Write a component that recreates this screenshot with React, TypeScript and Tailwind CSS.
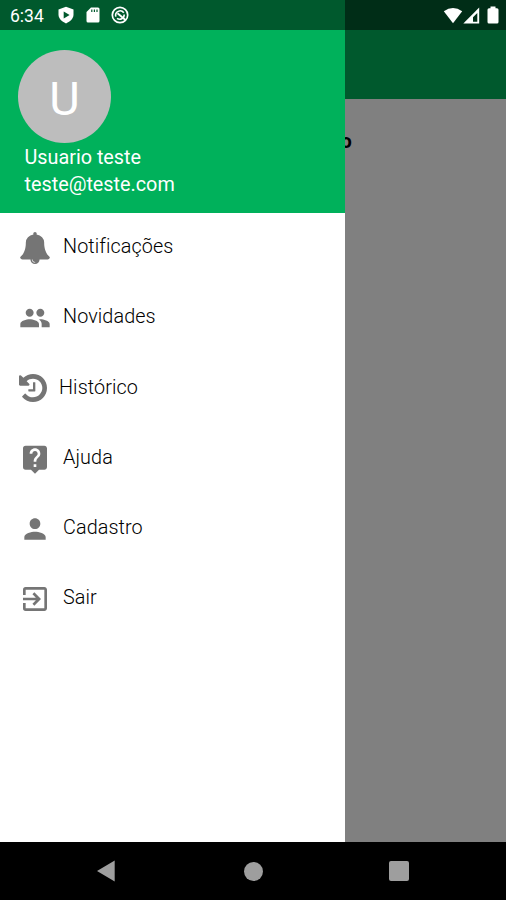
import React from 'react';
import { MdPeople, MdLiveHelp, MdPerson, MdExitToApp } from 'react-icons/md';

const BellIcon: React.FC = () => (
  <svg viewBox="0 0 1792 1792" className="w-8 h-8" fill="currentColor">
    <path d="M912 1696q0-16-16-16-59 0-101.5-42.5t-42.5-101.5q0-16-16-16t-16 16q0 73 51.5 124.5t124.5 51.5q16 0 16-16zm816-288q0 52-38 90t-90 38h-448q0 106-75 181t-181 75-181-75-75-181h-448q-52 0-90-38t-38-90q50-42 91-88t85-119.5 74.5-158.5 50-206 19.5-260q0-152 117-282.5t307-158.5q-8-19-8-39 0-40 28-68t68-28 68 28 28 68q0 20-8 39 190 28 307 158.5t117 282.5q0 139 19.5 260t50 206 74.5 158.5 85 119.5 91 88z" />
  </svg>
);

const HistoryIcon: React.FC = () => (
  <svg viewBox="0 128 1536 1536" className="w-7 h-7" fill="currentColor">
    <path d="M1536 896q0 156-61 298t-164 245-245 164-298 61q-172 0-327-72.5t-264-204.5q-7-10-6.5-22.5t8.5-20.5l137-138q10-9 25-9 16 2 23 12 73 95 179 147t225 52q104 0 198.5-40.5t163.5-109.5 109.5-163.5 40.5-198.5-40.5-198.5-109.5-163.5-163.5-109.5-198.5-40.5q-98 0-188 35.5t-160 101.5l137 138q31 30 14 69-17 40-59 40h-448q-26 0-45-19t-19-45v-448q0-42 40-59 39-17 69 14l130 129q107-101 244.5-156.5t284.5-55.5q156 0 298 61t245 164 164 245 61 298zm-640-288v448q0 14-9 23t-23 9h-320q-14 0-23-9t-9-23v-64q0-14 9-23t23-9h224v-352q0-14 9-23t23-9h64q14 0 23 9t9 23z" />
  </svg>
);

const StatusBar: React.FC = () => (
  <div className="flex h-[30px] shrink-0 text-white">
    <div className="flex w-[345px] items-center bg-[#00592d] pl-2.5">
      <span className="w-[48px] pt-[3px] text-[17.5px] leading-none">6:34</span>
      <svg viewBox="0 0 16 18" className="h-[18px] w-4">
        <path d="M8 .8 15.5 3.4V8.6C15.5 12.4 12.5 15.8 8 17.4 3.5 15.8 .5 12.4 .5 8.6V3.4Z" fill="#fff" />
        <path d="M5.7 5.6v6.8L11.6 9z" fill="#00592d" />
      </svg>
      <svg viewBox="0 0 14 16" className="ml-3 h-4 w-3.5">
        <path d="M5 .5H12Q13.5 .5 13.5 2V14Q13.5 15.5 12 15.5H2Q.5 15.5 .5 14V5Z" fill="#fff" />
        <path d="M5.2 2.5h1.2v2.600H5.200zM7.800 2.500h1.200v2.600H7.800zM10.400 2.500h1.200v2.600h-1.200z" fill="#00592d" />
      </svg>
      <svg viewBox="0 0 18 18" className="ml-[11px] h-[18px] w-[18px]" fill="none" stroke="#fff">
        <circle cx="9" cy="9" r="7.7" strokeWidth="1.7" />
        <path d="M4.8 10.6A4.5 4.5 0 0 1 12.8 6.8M13.2 8.5A4.5 4.5 0 0 1 6 12.3" strokeWidth="1.6" />
        <path d="M6.5 7.2 14.5 14" strokeWidth="1.9" />
      </svg>
    </div>
    <div className="flex flex-1 items-center justify-end bg-[#002d17] pr-[7px]">
      <svg viewBox="0 0 20 17" className="h-[17px] w-5" fill="#fff">
        <path d="M.8 4.3Q10-2.5 19.2 4.3L10 16.3Z" />
      </svg>
      <svg viewBox="0 0 17 17" className="h-[17px] w-[17px]">
        <path d="M16.2 .5V16.5H.3Z" fill="#fff" />
        <path d="M14.3 6V14.8H10V10.3Z" fill="#002d17" />
      </svg>
      <svg viewBox="0 0 12 18" className="ml-[7px] h-[18px] w-3" fill="#fff">
        <path d="M3.5 .5h5V2.3H10Q11.5 2.3 11.5 3.8V16Q11.5 17.5 10 17.5H2Q.5 17.5 .5 16V3.8Q.5 2.3 2 2.3H3.5Z" />
      </svg>
    </div>
  </div>
);

const menuItems = [
  { label: 'Notificações', icon: <BellIcon /> },
  { label: 'Novidades', icon: <MdPeople size={32} /> },
  { label: 'Histórico', icon: <HistoryIcon /> },
  { label: 'Ajuda', icon: <MdLiveHelp size={32} /> },
  { label: 'Cadastro', icon: <MdPerson size={32} /> },
  { label: 'Sair', icon: <MdExitToApp size={32} /> },
];

const Drawer: React.FC = () => (
  <aside className="w-[345px] shrink-0 bg-white">
    <div className="h-[183px] bg-[#00b15b] pt-[19.5px] text-white">
      <div className="ml-[18px] flex h-[93px] w-[93px] items-center justify-center rounded-full bg-[#bdbdbd] text-[47px] leading-none">
        <span className="pt-1">U</span>
      </div>
      <div className="ml-[24.5px] mt-px text-[19.8px] leading-[27px]">
        <p>Usuario teste</p>
        <p>teste@teste.com</p>
      </div>
    </div>
    <nav>
      {menuItems.map(item => (
        <a key={item.label} className="flex h-[70.2px] items-center pl-[18.5px] text-[#757575]">
          {item.icon}
          <span className="ml-[12.5px] -mt-0.5 text-[19.8px] font-light tracking-[0.1px] text-black">{item.label}</span>
        </a>
      ))}
    </nav>
  </aside>
);

const NavigationBar: React.FC = () => (
  <div className="flex h-[58px] shrink-0 items-center bg-black pl-[96px] text-[#9e9e9e]">
    <svg viewBox="0 0 20 22" className="h-[22px] w-5" fill="currentColor">
      <path d="M1 11 18.7 .5V21.5Z" />
    </svg>
    <div className="ml-[128px] h-[19px] w-[19px] rounded-full bg-current" />
    <div className="ml-[126px] h-5 w-5 rounded-[2px] bg-current" />
  </div>
);

export default function App() {
  return (
    <div className="flex h-[900px] w-[506px] flex-col overflow-hidden font-['Roboto',sans-serif]">
      <StatusBar />
      <div className="flex flex-1">
        <Drawer />
        <main className="flex-1 bg-[#808080]">
          <div className="h-[69px] bg-[#00592d]" />
          <div className="mt-[30px] w-5 overflow-hidden">
            <span className="-ml-[4.5px] block text-[20px] font-bold leading-6 text-black">o</span>
          </div>
        </main>
      </div>
      <NavigationBar />
    </div>
  );
}
